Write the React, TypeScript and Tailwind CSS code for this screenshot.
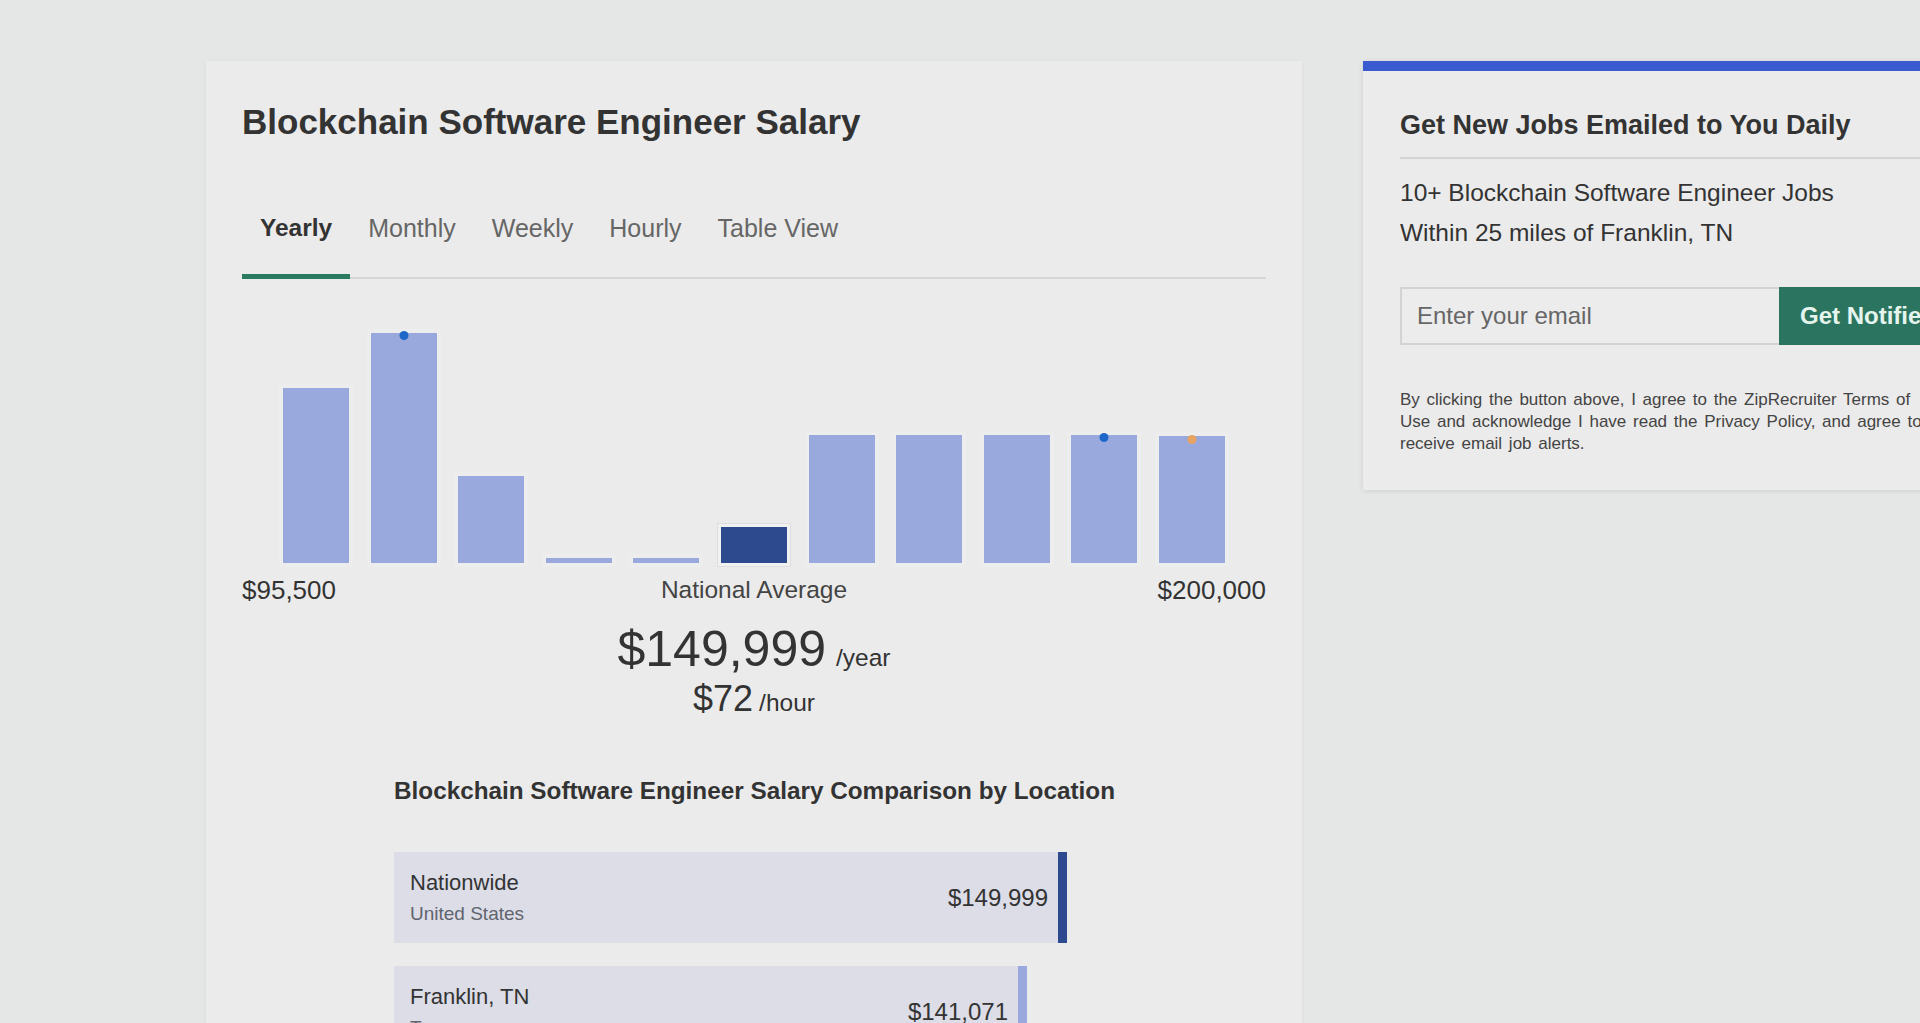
import React from "react";

const bars = [
  { h: 175 },
  { h: 230, dot: "blue" },
  { h: 87 },
  { h: 5 },
  { h: 5 },
  { h: 36, dark: true },
  { h: 128 },
  { h: 128 },
  { h: 128 },
  { h: 128, dot: "blue" },
  { h: 127, dot: "orange" },
];

function Chart() {
  return (
    <div className="flex h-[288px] items-end justify-between px-[37px]">
      {bars.map((b, i) => (
        <div
          key={i}
          className={
            b.dark
              ? "relative w-[74px] border border-[#dedede] bg-[#f1f1f1] p-[3px]"
              : "relative w-[74px] bg-[#ededed] p-[4px]"
          }
        >
          <div
            className={b.dark ? "w-full bg-[#2e4a8f]" : "w-full bg-[#99a9dd]"}
            style={{ height: b.h }}
          />
          {b.dot === "blue" && (
            <div className="absolute left-1/2 top-[2px] h-[9px] w-[9px] -translate-x-1/2 rounded-full bg-[#1f66c9]" />
          )}
          {b.dot === "orange" && (
            <div className="absolute left-1/2 top-[3px] h-[9px] w-[9px] -translate-x-1/2 rounded-full bg-[#e7a462]" />
          )}
        </div>
      ))}
    </div>
  );
}

export default function App() {
  return (
    <div className="h-[1023px] w-[1920px] overflow-hidden bg-[#e5e6e6] font-['Liberation_Sans',Arial,sans-serif] text-[#333333]">
      <div className="flex items-start gap-[61px] pl-[206px] pt-[61px]">
        {/* Main card */}
        <div className="w-[1096px] shrink-0 bg-[#ebebeb] px-[36px] pb-[80px] pt-[40px] shadow-[0_1px_4px_rgba(0,0,0,0.06)]">
          <h1 className="text-[35px] font-bold leading-[42px] text-[#333333]">
            Blockchain Software Engineer Salary
          </h1>

          <div className="mt-[71px] flex border-b-2 border-[#d5d5d5]">
            {["Yearly", "Monthly", "Weekly", "Hourly", "Table View"].map((t, i) => (
              <div
                key={t}
                className={
                  i === 0
                    ? "-mb-[2px] border-b-[5px] border-[#2b7a62] px-[18px] pb-[32px] text-[24.5px] font-bold leading-[28px] text-[#333333]"
                    : "-mb-[2px] border-b-[5px] border-transparent px-[18px] pb-[32px] text-[25px] leading-[28px] text-[#666666]"
                }
              >
                {t}
              </div>
            ))}
          </div>

          <Chart />

          <div className="mt-[9px] grid grid-cols-[1fr_auto_1fr] items-center leading-[28px] text-[#333333]">
            <span className="justify-self-start text-[26px]">$95,500</span>
            <span className="text-[24.5px] text-[#444444]">National Average</span>
            <span className="justify-self-end text-[26px]">$200,000</span>
          </div>

          <div className="mt-[20px] flex items-baseline justify-center leading-none">
            <span className="text-[50px] leading-[50px]">$149,999</span>
            <span className="ml-[10px] text-[24.5px]">/year</span>
          </div>
          <div className="mt-[7px] flex items-baseline justify-center leading-none">
            <span className="text-[36px] leading-[36px]">$72</span>
            <span className="ml-[6px] text-[24.5px]">/hour</span>
          </div>

          <div className="mx-auto mt-[60px] w-[720px]">
            <h2 className="whitespace-nowrap text-[24.3px] font-bold leading-[28px] text-[#333333]">
              Blockchain Software Engineer Salary Comparison by Location
            </h2>

            <div className="mt-[47px] flex flex-col gap-[23px]">
              <div className="flex h-[91px] w-[673px] items-center border-r-[9px] border-[#2e4a8f] bg-[#dcdde7] pl-[16px] pr-[10px]">
                <div className="flex flex-1 flex-col gap-[6px]">
                  <span className="text-[22px] leading-[26px] text-[#333333]">Nationwide</span>
                  <span className="text-[19px] leading-[24px] text-[#60646e]">United States</span>
                </div>
                <span className="text-[24px] leading-[28px] text-[#333333]">$149,999</span>
              </div>
              <div className="flex h-[91px] w-[633px] items-center border-r-[9px] border-[#9aa9dd] bg-[#dcdde7] pl-[16px] pr-[10px]">
                <div className="flex flex-1 flex-col gap-[6px]">
                  <span className="text-[22px] leading-[26px] text-[#333333]">Franklin, TN</span>
                  <span className="text-[19px] leading-[24px] text-[#60646e]">Tennessee</span>
                </div>
                <span className="text-[24px] leading-[28px] text-[#333333]">$141,071</span>
              </div>
              <div className="flex h-[91px] w-[600px] items-center border-r-[9px] border-[#9aa9dd] bg-[#dcdde7] pl-[16px] pr-[10px]">
                <div className="flex flex-1 flex-col gap-[6px]">
                  <span className="text-[22px] leading-[26px] text-[#333333]">Tennessee</span>
                  <span className="text-[19px] leading-[24px] text-[#60646e]">Statewide</span>
                </div>
                <span className="text-[24px] leading-[28px] text-[#333333]">$133,000</span>
              </div>
            </div>
          </div>
        </div>

        {/* Right card */}
        <div className="w-[620px] shrink-0 border-t-[10px] border-[#3a5bd0] bg-[#ebebeb] px-[37px] pb-[35px] pt-[38px] shadow-[0_1px_5px_rgba(0,0,0,0.1)]">
          <h3 className="whitespace-nowrap text-[27px] font-bold leading-[32px] text-[#333333]">
            Get New Jobs Emailed to You Daily
          </h3>
          <div className="mt-[16px] h-[2px] w-[600px] bg-[#d4d4d4]" />
          <div className="mt-[14px] whitespace-nowrap text-[24.5px] leading-[40px] text-[#333333]">
            <div>10+ Blockchain Software Engineer Jobs</div>
            <div>Within 25 miles of Franklin, TN</div>
          </div>
          <div className="mt-[34px] flex h-[58px] w-[600px]">
            <div className="flex w-[379px] shrink-0 items-center border-2 border-r-0 border-[#d3d3d3] bg-[#ececec] pl-[15px] text-[24px] text-[#666666]">
              Enter your email
            </div>
            <div className="flex flex-1 items-center whitespace-nowrap bg-[#2b7560] pl-[21px] text-[24px] font-bold text-[#e6f4ee]">
              Get Notified
            </div>
          </div>
          <p className="mt-[44px] whitespace-nowrap text-[17px] leading-[22px] text-[#444444] [word-spacing:2px]">
            By clicking the button above, I agree to the ZipRecruiter Terms of
            <br />
            Use and acknowledge I have read the Privacy Policy, and agree to
            <br />
            receive email job alerts.
          </p>
        </div>
      </div>
    </div>
  );
}
